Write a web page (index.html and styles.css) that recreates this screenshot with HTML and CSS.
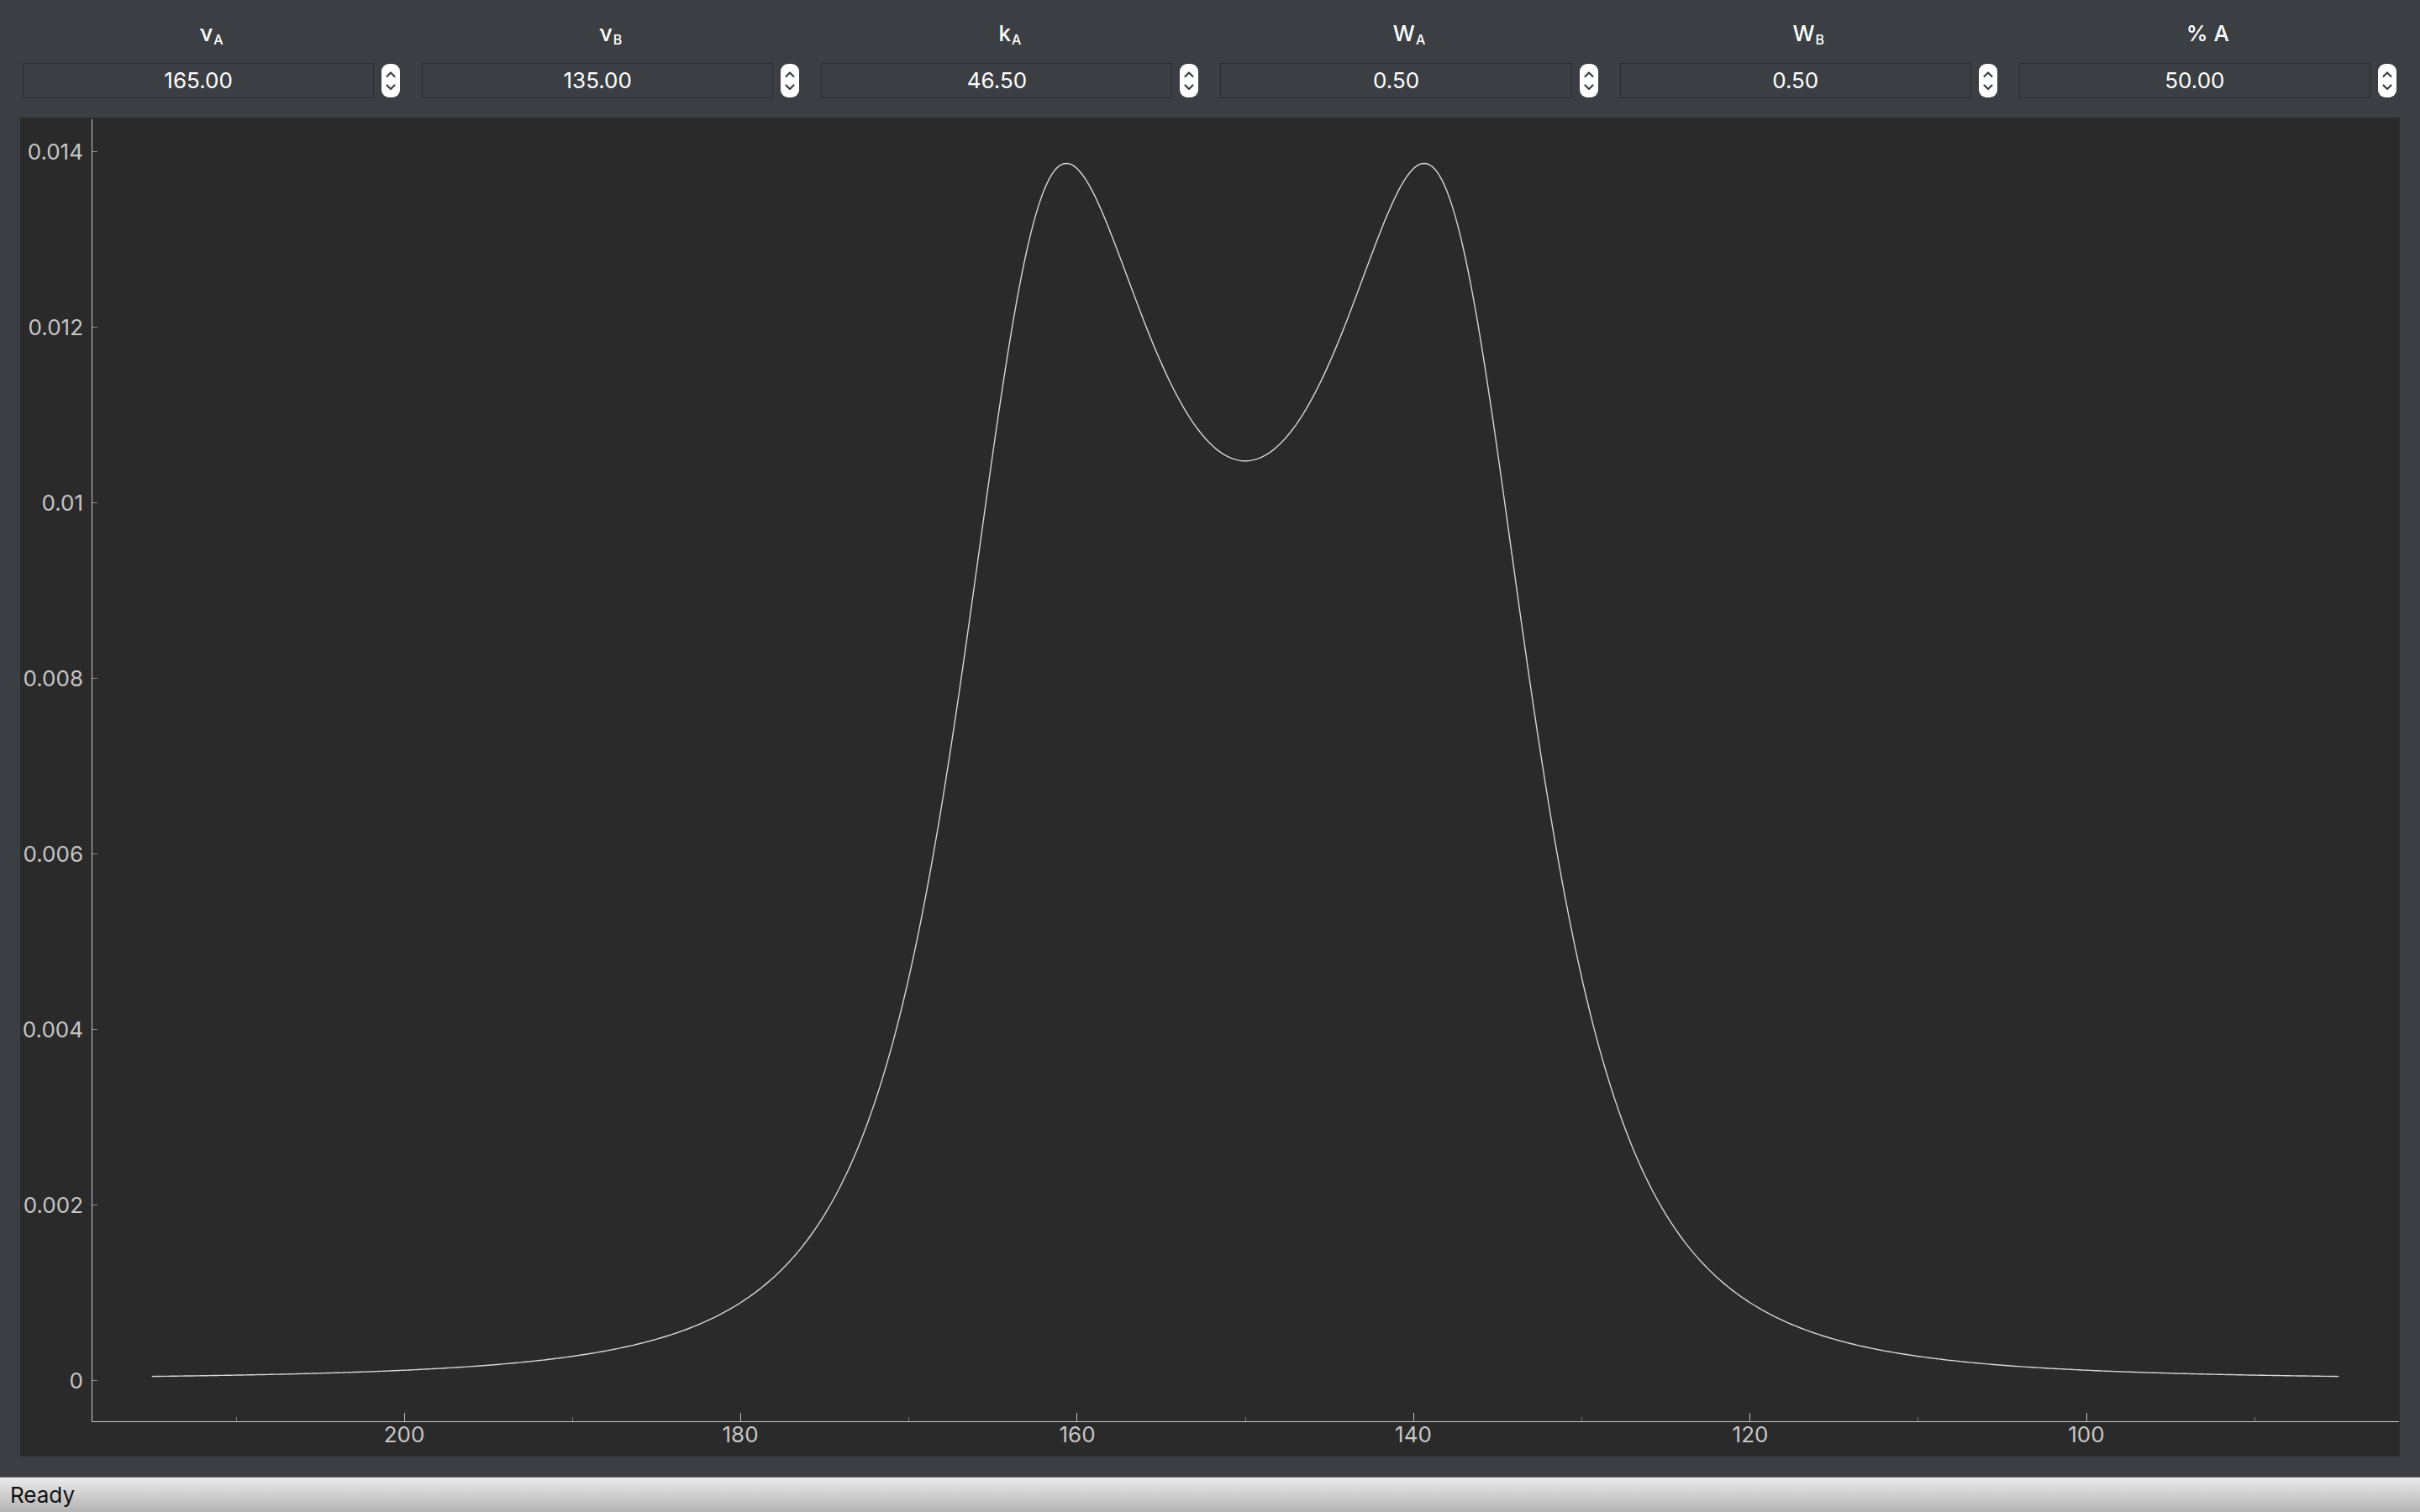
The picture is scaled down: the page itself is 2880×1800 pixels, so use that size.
FILE: index.html
```html
<!DOCTYPE html>
<html lang="en">
<head>
<meta charset="utf-8">
<title>DNMR two-site exchange</title>
<link rel="stylesheet" href="styles.css">
</head>
<body>
<div class="app">
  <div class="controls">
    <div class="param">
      <div class="label">ν<sub>A</sub></div>
      <div class="spin"><div class="field">165.00</div><svg class="stepper" viewBox="0 0 22 40"><rect x="0" y="0" width="22" height="40" rx="9" fill="#fff"/><path d="M6.5 15 L11 10.5 L15.5 15 M6.5 25.5 L11 30 L15.5 25.5" fill="none" stroke="#3a3d40" stroke-width="2.2" stroke-linecap="round" stroke-linejoin="round"/></svg></div>
    </div>
    <div class="param">
      <div class="label">ν<sub>B</sub></div>
      <div class="spin"><div class="field">135.00</div><svg class="stepper" viewBox="0 0 22 40"><rect x="0" y="0" width="22" height="40" rx="9" fill="#fff"/><path d="M6.5 15 L11 10.5 L15.5 15 M6.5 25.5 L11 30 L15.5 25.5" fill="none" stroke="#3a3d40" stroke-width="2.2" stroke-linecap="round" stroke-linejoin="round"/></svg></div>
    </div>
    <div class="param">
      <div class="label">k<sub>A</sub></div>
      <div class="spin"><div class="field">46.50</div><svg class="stepper" viewBox="0 0 22 40"><rect x="0" y="0" width="22" height="40" rx="9" fill="#fff"/><path d="M6.5 15 L11 10.5 L15.5 15 M6.5 25.5 L11 30 L15.5 25.5" fill="none" stroke="#3a3d40" stroke-width="2.2" stroke-linecap="round" stroke-linejoin="round"/></svg></div>
    </div>
    <div class="param">
      <div class="label">W<sub>A</sub></div>
      <div class="spin"><div class="field">0.50</div><svg class="stepper" viewBox="0 0 22 40"><rect x="0" y="0" width="22" height="40" rx="9" fill="#fff"/><path d="M6.5 15 L11 10.5 L15.5 15 M6.5 25.5 L11 30 L15.5 25.5" fill="none" stroke="#3a3d40" stroke-width="2.2" stroke-linecap="round" stroke-linejoin="round"/></svg></div>
    </div>
    <div class="param">
      <div class="label">W<sub>B</sub></div>
      <div class="spin"><div class="field">0.50</div><svg class="stepper" viewBox="0 0 22 40"><rect x="0" y="0" width="22" height="40" rx="9" fill="#fff"/><path d="M6.5 15 L11 10.5 L15.5 15 M6.5 25.5 L11 30 L15.5 25.5" fill="none" stroke="#3a3d40" stroke-width="2.2" stroke-linecap="round" stroke-linejoin="round"/></svg></div>
    </div>
    <div class="param">
      <div class="label">% A</div>
      <div class="spin"><div class="field">50.00</div><svg class="stepper" viewBox="0 0 22 40"><rect x="0" y="0" width="22" height="40" rx="9" fill="#fff"/><path d="M6.5 15 L11 10.5 L15.5 15 M6.5 25.5 L11 30 L15.5 25.5" fill="none" stroke="#3a3d40" stroke-width="2.2" stroke-linecap="round" stroke-linejoin="round"/></svg></div>
    </div>
  </div>

  <div class="plot">
    <svg class="chart" width="2832" height="1594" viewBox="24 140 2832 1594">
      <g class="axis">
        <line x1="109.5" y1="142" x2="109.5" y2="1692"/>
        <line x1="109" y1="1692.5" x2="2855" y2="1692.5"/>
      </g>
      <g class="yticks">
        <line x1="110" y1="1643.5" x2="116" y2="1643.5"/>
        <line x1="110" y1="1434.5" x2="116" y2="1434.5"/>
        <line x1="110" y1="1225.5" x2="116" y2="1225.5"/>
        <line x1="110" y1="1016.5" x2="116" y2="1016.5"/>
        <line x1="110" y1="807.5" x2="116" y2="807.5"/>
        <line x1="110" y1="598.5" x2="116" y2="598.5"/>
        <line x1="110" y1="389.5" x2="116" y2="389.5"/>
        <line x1="110" y1="180.5" x2="116" y2="180.5"/>
      </g>
      <g class="ylabels">
        <text x="99" y="1643">0</text>
        <text x="99" y="1434">0.002</text>
        <text x="99" y="1225">0.004</text>
        <text x="99" y="1016">0.006</text>
        <text x="99" y="807">0.008</text>
        <text x="99" y="598">0.01</text>
        <text x="99" y="389">0.012</text>
        <text x="99" y="180">0.014</text>
      </g>
      <g class="xmajor">
        <line x1="481.5" y1="1682" x2="481.5" y2="1692"/>
        <line x1="881.5" y1="1682" x2="881.5" y2="1692"/>
        <line x1="1281.5" y1="1682" x2="1281.5" y2="1692"/>
        <line x1="1682.5" y1="1682" x2="1682.5" y2="1692"/>
        <line x1="2082.5" y1="1682" x2="2082.5" y2="1692"/>
        <line x1="2483.5" y1="1682" x2="2483.5" y2="1692"/>
      </g>
      <g class="xminor">
        <line x1="281.5" y1="1687" x2="281.5" y2="1692"/>
        <line x1="681.5" y1="1687" x2="681.5" y2="1692"/>
        <line x1="1081.5" y1="1687" x2="1081.5" y2="1692"/>
        <line x1="1482.5" y1="1687" x2="1482.5" y2="1692"/>
        <line x1="1882.5" y1="1687" x2="1882.5" y2="1692"/>
        <line x1="2282.5" y1="1687" x2="2282.5" y2="1692"/>
        <line x1="2683.5" y1="1687" x2="2683.5" y2="1692"/>
      </g>
      <g class="xlabels">
        <text x="481" y="1707">200</text>
        <text x="881" y="1707">180</text>
        <text x="1282" y="1707">160</text>
        <text x="1682" y="1707">140</text>
        <text x="2083" y="1707">120</text>
        <text x="2483" y="1707">100</text>
      </g>
      <path id="curve" class="curve" d=""/>
    </svg>
  </div>

  <div class="status">Ready</div>
</div>
<script src="script.js"></script>
</body>
</html>
```

FILE: styles.css
```css
html, body {
  margin: 0;
  padding: 0;
}

body {
  width: 2880px;
  height: 1800px;
  overflow: hidden;
  background: #3b3f43;
  font-family: "Inter", "Liberation Sans", sans-serif;
}

.app {
  display: flex;
  flex-direction: column;
  width: 2880px;
  height: 1800px;
}

.controls {
  display: grid;
  grid-template-columns: repeat(6, 1fr);
  column-gap: 26px;
  padding: 23px 28px 0 27px;
}

.param {
  display: flex;
  flex-direction: column;
}

.label {
  height: 34px;
  line-height: 34px;
  text-align: center;
  color: #ffffff;
  font-size: 26px;
  font-weight: 500;
  margin-bottom: 18px;
}

.label sub {
  font-size: 16px;
  line-height: 0;
  vertical-align: -4px;
  margin-left: 1px;
}

.spin {
  display: flex;
  align-items: center;
  gap: 9px;
  height: 42px;
}

.field {
  flex: 1;
  height: 40px;
  line-height: 40px;
  border: 1px solid #2a2d30;
  text-align: center;
  color: #ffffff;
  font-size: 26px;
}

.stepper {
  width: 22px;
  height: 40px;
  flex: none;
}

.plot {
  margin: 23px 24px 0 24px;
  height: 1594px;
  background: #2a2a2a;
}

.chart {
  display: block;
}

.axis line {
  stroke: #c8c8c8;
  stroke-width: 1;
}

.yticks line {
  stroke: #8a8a8a;
  stroke-width: 1;
}

.xmajor line {
  stroke: #bdbdbd;
  stroke-width: 1;
}

.xminor line {
  stroke: #7a7a7a;
  stroke-width: 1;
}

.ylabels text {
  fill: #c6c6c6;
  font-size: 26px;
  text-anchor: end;
  dominant-baseline: central;
  font-family: "Inter", "Liberation Sans", sans-serif;
}

.xlabels text {
  fill: #c6c6c6;
  font-size: 26px;
  text-anchor: middle;
  dominant-baseline: central;
  font-family: "Inter", "Liberation Sans", sans-serif;
}

.curve {
  fill: none;
  stroke: #d6d6d6;
  stroke-width: 1.4;
}

.status {
  margin-top: 24px;
  height: 41px;
  line-height: 41px;
  border-top: 1px solid #6e6e6e;
  background: linear-gradient(#ebebeb, #b3b3b3);
  color: #111111;
  font-size: 26px;
  padding-left: 12px;
}
```

FILE: script.js
```js
(function () {
  var va = 165, vb = 135, ka = 46.5, wa = 0.5, wb = 0.5, pa = 0.5;
  var pi = Math.PI;
  var T2a = 1 / (pi * wa);
  var T2b = 1 / (pi * wb);
  var pb = 1 - pa;
  var tau = pb / ka;
  var dv = va - vb;

  function intensity(v) {
    var Dv = (va + vb) / 2 - v;
    var P = tau * (1 / (T2a * T2b) - 4 * pi * pi * Dv * Dv + pi * pi * dv * dv) + pa / T2a + pb / T2b;
    var p = 1 + tau * ((pb / T2a) + (pa / T2b));
    var Q = tau * (2 * pi * Dv - pi * dv * (pa - pb));
    var R = 2 * pi * Dv * (1 + tau * ((1 / T2a) + (1 / T2b))) +
            pi * dv * tau * ((1 / T2b) - (1 / T2a)) + pi * dv * (pa - pb);
    return (P * p + Q * R) / (P * P + R * R);
  }

  var lo = 85, hi = 215, n = 800;
  var d = "";
  for (var i = 0; i < n; i++) {
    var v = hi - (hi - lo) * i / (n - 1);
    var x = 481 + (200 - v) * 20.02;
    var y = 1643 - intensity(v) * 104500;
    d += (i === 0 ? "M" : "L") + x.toFixed(2) + " " + y.toFixed(2);
  }
  document.getElementById("curve").setAttribute("d", d);
})();
```
